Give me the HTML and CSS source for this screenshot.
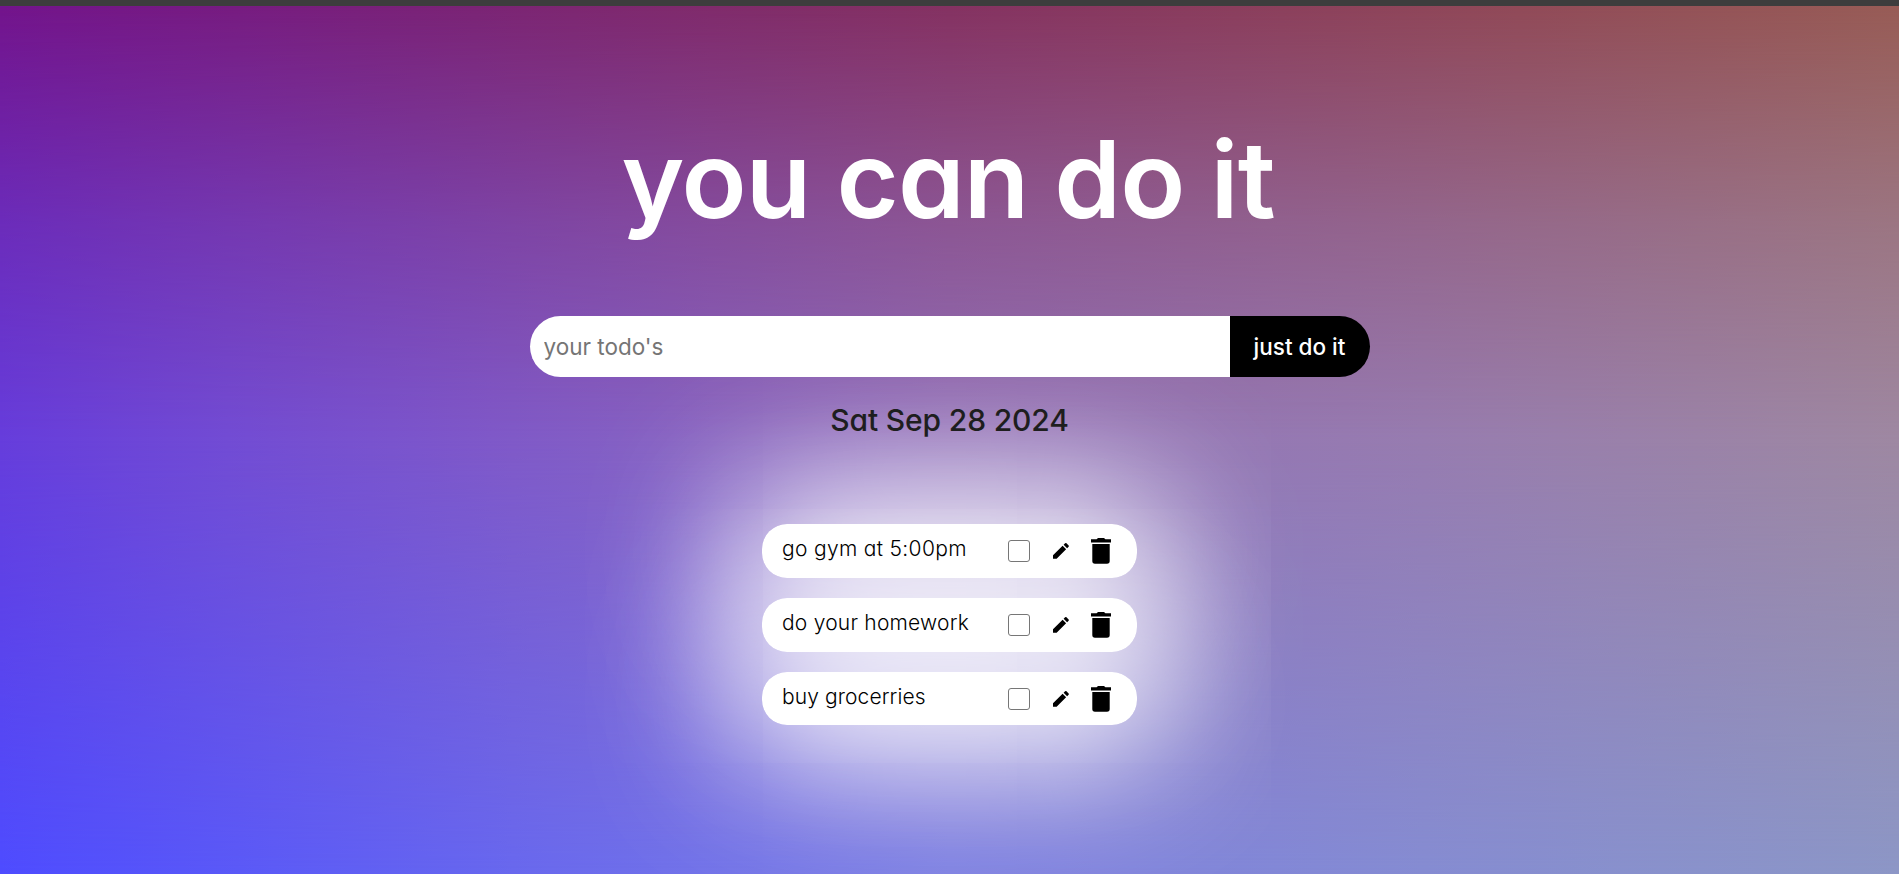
FILE: index.html
```html
<!DOCTYPE html>
<html lang="en">
<head>
<meta charset="utf-8">
<title>you can do it</title>
<link rel="stylesheet" href="styles.css">
</head>
<body>
<svg class="sprite" aria-hidden="true">
  <symbol id="pencil" viewBox="0 0 16 16"><path d="M0 12.2 9.6 2.8l3.5 3.5L3.6 15.8H0zM10.6 1.8l1.5-1.5q.7-.6 1.4 0l2.1 2.1q.6.7 0 1.4l-1.5 1.5z"/></symbol>
  <symbol id="trash" viewBox="0 0 20 26"><path d="M0 1.3h5.6L7 .1h6l1.400 1.200H20V4.500H0zM1.300 5.900h17.400V23q0 2.700-2.700 2.700H4Q1.300 25.700 1.300 23z"/></symbol>
</svg>
<main class="page">
  <h1 class="title">you can do it</h1>
  <form class="todo-form">
    <input class="todo-input" type="text" placeholder="your todo's">
    <button class="todo-button" type="button">just do it</button>
  </form>
  <p class="date">Sat Sep 28 2024</p>
  <ul class="list">
    <li class="item"><span class="label gym">go gym at 5:00pm</span><span class="check"></span><svg class="pencil"><use href="#pencil"/></svg><svg class="trash"><use href="#trash"/></svg></li>
    <li class="item"><span class="label home">do your homework</span><span class="check"></span><svg class="pencil"><use href="#pencil"/></svg><svg class="trash"><use href="#trash"/></svg></li>
    <li class="item"><span class="label buy">buy grocerries</span><span class="check"></span><svg class="pencil"><use href="#pencil"/></svg><svg class="trash"><use href="#trash"/></svg></li>
  </ul>
</main>
</body>
</html>
```
FILE: styles.css
```css
* { box-sizing: border-box; }
body {
  margin: 0;
  font-family: Inter, "Open Sans", sans-serif;
  font-feature-settings: "cv11", "ss03";
}
.sprite { display: none; }
.page {
  position: relative;
  isolation: isolate;
  display: flex;
  flex-direction: column;
  align-items: center;
  height: 874px;
  overflow: hidden;
  border-top: 6px solid #3d3d3d;
  background: linear-gradient(90deg, #73148c 0%, #7b2475 25%, #853262 50%, #914a58 80%, #985c56 100%);
}
.page::before, .page::after {
  content: "";
  position: absolute;
  inset: 0;
  z-index: -2;
}
.page::before {
  background: linear-gradient(90deg, #663ddc 0%, #724cd4 12%, #805ac8 27%, #9170b8 50%, #977cb0 75%, #9e88a2 100%);
  mask-image: linear-gradient(180deg, transparent 0%, rgba(0,0,0,.58) 25%, #000 50%);
}
.page::after {
  background: linear-gradient(90deg, #4e4cff 0%, #6868ee 27%, #7c7fe2 50%, #858cd2 75%, #8c96c6 100%);
  mask-image: linear-gradient(180deg, transparent 50%, #000 100%);
}
.title {
  margin: 103px 3px 0 0;
  height: 140px;
  line-height: 140px;
  font-size: 107px;
  font-weight: 600;
  letter-spacing: -0.9px;
  color: #fff;
  white-space: nowrap;
}
.todo-form {
  display: flex;
  width: 840px;
  height: 61px;
  margin-top: 67px;
}
.todo-input {
  width: 700px;
  border: 0;
  padding: 0 14px;
  border-radius: 31px 0 0 31px;
  background: #fff;
  font: inherit;
  font-size: 22.500px;
  letter-spacing: 0;
}
.todo-input::placeholder { color: #757575; }
.todo-button {
  width: 140px;
  border: 0;
  padding: 0;
  border-radius: 0 31px 31px 0;
  background: #000;
  color: #fff;
  font: inherit;
  font-size: 22.500px;
  font-weight: 500;
}
.date {
  margin: 23px 0 0;
  height: 40px;
  line-height: 40px;
  font-size: 30px;
  font-weight: 500;
  letter-spacing: -0.15px;
  color: #1e1e1e;
}
.list {
  display: flex;
  flex-direction: column;
  gap: 20px;
  margin: 84px 0 0;
  padding: 0;
  list-style: none;
}
.item {
  position: relative;
  display: flex;
  align-items: center;
  width: 375px;
  height: 54px;
  padding: 0 26px 0 20px;
  border-radius: 25px;
  background: #fff;
}
.item:last-child { height: 53px; }
.item::before {
  content: "";
  position: absolute;
  inset: 0;
  z-index: -1;
  border-radius: 25px;
  box-shadow: 0 0 150px 30px #fff;
}
.label {
  width: 226px;
  line-height: 50px;
  margin-top: -4px;
  font-size: 21px;
  font-weight: 300;
  color: #000;
  white-space: nowrap;
}
.gym { letter-spacing: 0.32px; }
.home { letter-spacing: 0.22px; }
.buy { letter-spacing: 0.1px; }
.check {
  width: 22px;
  height: 22px;
  border: 1px solid #767676;
  border-radius: 3px;
}
.pencil { width: 16px; height: 16px; margin-left: 23px; }
.trash { width: 20px; height: 26px; margin-left: 22px; }
```
